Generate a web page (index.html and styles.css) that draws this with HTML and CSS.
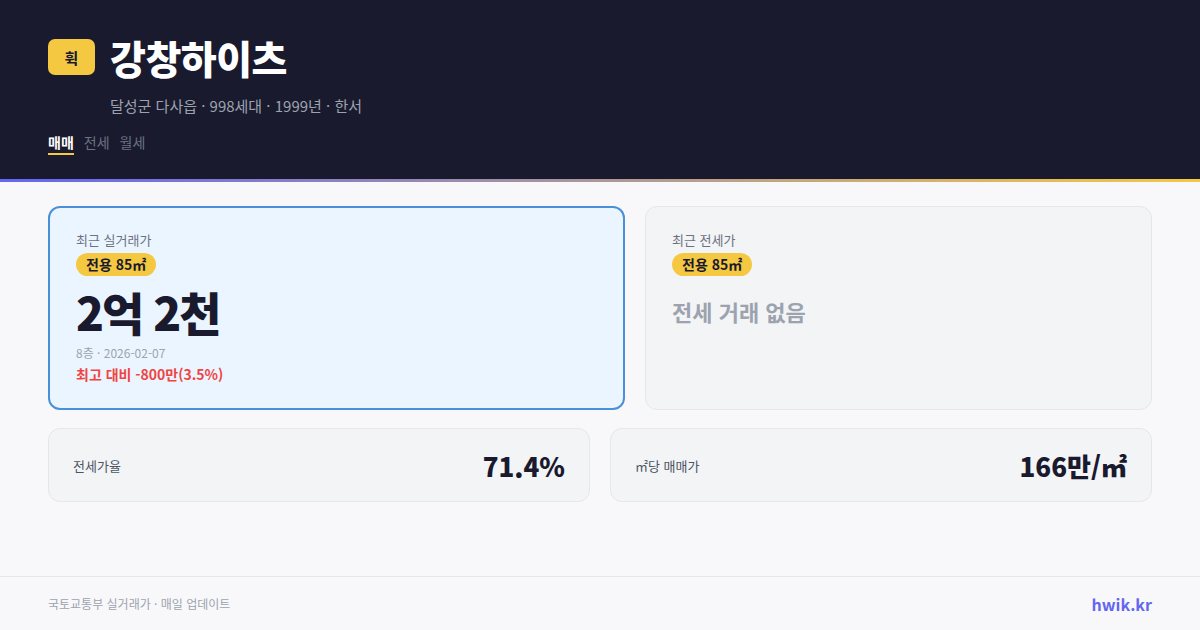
FILE: index.html
```html
<!DOCTYPE html>
<html lang="ko">
<head>
<meta charset="utf-8">
<link rel="stylesheet" href="styles.css">
</head>
<body>
<div class="page">
  <header class="header">
    <div class="title-row">
      <div class="logo">휙</div>
      <h1 class="title">강창하이츠</h1>
    </div>
    <div class="subtitle">달성군 다사읍 · 998세대 · 1999년 · 한서</div>
    <nav class="tabs">
      <span class="tab active">매매</span>
      <span class="tab">전세</span>
      <span class="tab">월세</span>
    </nav>
  </header>
  <div class="accent"></div>
  <main class="main">
    <div class="top-row">
      <section class="card card-primary">
        <div class="card-label">최근 실거래가</div>
        <span class="badge">전용 85㎡</span>
        <div class="price">2억 2천</div>
        <div class="meta">8층 · 2026-02-07</div>
        <div class="diff">최고 대비 -800만(3.5%)</div>
      </section>
      <section class="card card-secondary">
        <div class="card-label">최근 전세가</div>
        <span class="badge">전용 85㎡</span>
        <div class="empty">전세 거래 없음</div>
      </section>
    </div>
    <div class="stat-row">
      <div class="stat">
        <span class="stat-label">전세가율</span>
        <span class="stat-value">71.4%</span>
      </div>
      <div class="stat">
        <span class="stat-label">㎡당 매매가</span>
        <span class="stat-value">166만/㎡</span>
      </div>
    </div>
  </main>
  <footer class="footer">
    <span class="source">국토교통부 실거래가 · 매일 업데이트</span>
    <span class="brand">hwik.kr</span>
  </footer>
</div>
</body>
</html>
```
FILE: styles.css
```css
* { box-sizing: border-box; }
html, body {
  margin: 0;
  padding: 0;
}
body {
  width: 1200px;
  height: 630px;
  overflow: hidden;
  background: #f8f8fa;
  font-family: "Noto Sans CJK KR", "Noto Sans", sans-serif;
  color: #1a1a2e;
}
.page {
  height: 630px;
  display: flex;
  flex-direction: column;
}
.header {
  background: #1a1a2e;
  height: 179px;
  padding: 37px 48px 0;
}
.title-row {
  display: flex;
  align-items: center;
  gap: 15px;
  height: 40px;
}
.logo {
  width: 47px;
  height: 36px;
  border-radius: 7px;
  background: #f5c842;
  color: #1a1a2e;
  font-size: 15px;
  font-weight: 700;
  display: flex;
  align-items: center;
  justify-content: center;
}
.title {
  margin: 0;
  font-size: 39px;
  font-weight: 900;
  color: #ffffff;
  letter-spacing: -0.5px;
  line-height: 40px;
}
.subtitle {
  margin: 19px 0 0 62px;
  font-size: 15px;
  line-height: 20px;
  color: #9ca3af;
}
.tabs {
  display: flex;
  gap: 10px;
  margin-top: 16px;
}
.tab {
  font-size: 14px;
  line-height: 20px;
  color: #6b7280;
  padding-bottom: 1px;
  border-bottom: 2px solid transparent;
}
.tab.active {
  color: #ffffff;
  font-weight: 700;
  border-bottom-color: #f5c842;
}
.accent {
  height: 3px;
  background: linear-gradient(90deg, #6366f1, #f5c842);
}
.main {
  flex: 1;
  padding: 24px 48px 0;
  display: flex;
  flex-direction: column;
  gap: 18px;
}
.top-row {
  display: grid;
  grid-template-columns: 577fr 507fr;
  gap: 20px;
}
.card {
  height: 204px;
  border-radius: 12px;
  padding: 23px 26px;
  display: flex;
  flex-direction: column;
  align-items: flex-start;
}
.card-primary {
  background: #ebf5ff;
  border: 2px solid #4a90d9;
}
.card-secondary {
  background: #f3f4f6;
  border: 1px solid #e5e7eb;
  padding-top: 24px;
}
.card-label {
  font-size: 13px;
  line-height: 18px;
  color: #6b7280;
}
.badge {
  margin-top: 4px;
  background: #f5c842;
  color: #1a1a2e;
  font-size: 14px;
  font-weight: 700;
  line-height: 23px;
  padding: 0 10px;
  border-radius: 12px;
}
.price {
  margin-top: 4px;
  font-size: 46px;
  font-weight: 800;
  line-height: 62px;
  letter-spacing: -2px;
  color: #1a1a2e;
}
.meta {
  margin-top: 2px;
  font-size: 12px;
  line-height: 18px;
  color: #9ca3af;
}
.diff {
  margin-top: 2px;
  font-size: 14px;
  font-weight: 600;
  line-height: 20px;
  color: #ef4444;
}
.empty {
  margin-top: 20px;
  font-size: 22px;
  font-weight: 700;
  line-height: 30px;
  color: #9ca3af;
}
.stat-row {
  display: grid;
  grid-template-columns: 1fr 1fr;
  gap: 20px;
}
.stat {
  height: 74px;
  background: #f3f4f6;
  border: 1px solid #e5e7eb;
  border-radius: 12px;
  padding: 0 24px;
  display: flex;
  align-items: center;
  justify-content: space-between;
}
.stat-label {
  font-size: 13px;
  color: #4b5563;
}
.stat-value {
  font-size: 26px;
  font-weight: 800;
  color: #1a1a2e;
}
.footer {
  height: 54px;
  border-top: 1px solid #e5e7eb;
  padding: 0 48px;
  display: flex;
  align-items: center;
  justify-content: space-between;
}
.source {
  font-size: 12px;
  color: #9ca3af;
}
.brand {
  font-size: 16px;
  font-weight: 700;
  color: #6366f1;
}
```
